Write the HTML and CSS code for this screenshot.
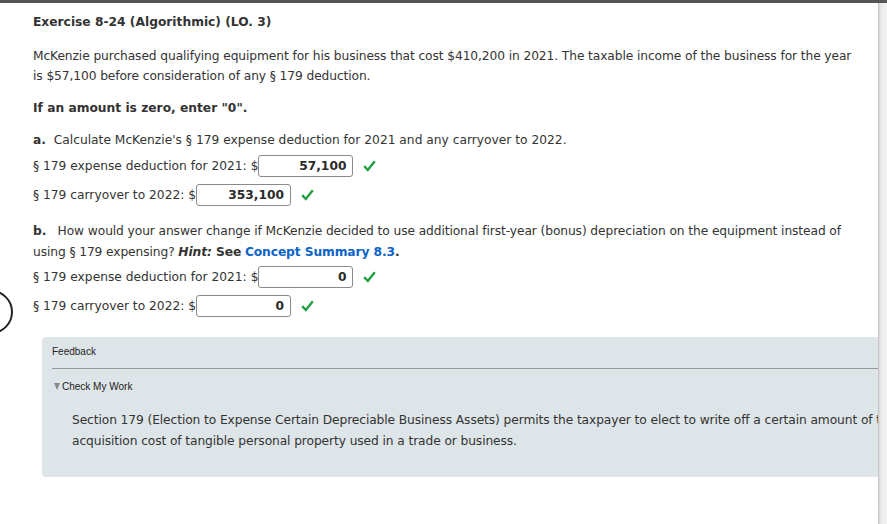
FILE: index.html
```html
<!DOCTYPE html>
<html>
<head>
<meta charset="utf-8">
<link rel="stylesheet" href="styles.css">
</head>
<body>
<div class="topbar"></div>
<div class="page">
  <div class="content">
    <h1 class="title">Exercise 8-24 (Algorithmic) (LO. 3)</h1>
    <p class="para">McKenzie purchased qualifying equipment for his business that cost $410,200 in 2021. The taxable income of the business for the year<br>is $57,100 before consideration of any § 179 deduction.</p>
    <p class="instr">If an amount is zero, enter "0".</p>

    <p class="part"><b>a.</b>&nbsp; Calculate McKenzie's § 179 expense deduction for 2021 and any carryover to 2022.</p>
    <div class="row r1"><span class="lbl">§ 179 expense deduction for 2021: $</span><span class="inp">57,100</span><span class="check"><svg width="13" height="12" viewBox="0 0 13 12"><path d="M1.2 6.2 L4.8 10 L11.8 1.2" fill="none" stroke="#21a042" stroke-width="2.4"/></svg></span></div>
    <div class="row r2"><span class="lbl">§ 179 carryover to 2022: $</span><span class="inp">353,100</span><span class="check"><svg width="13" height="12" viewBox="0 0 13 12"><path d="M1.2 6.2 L4.8 10 L11.8 1.2" fill="none" stroke="#21a042" stroke-width="2.4"/></svg></span></div>

    <p class="part partb"><b>b.</b>&nbsp;&nbsp; How would your answer change if McKenzie decided to use additional first-year (bonus) depreciation on the equipment instead of<br>using § 179 expensing? <b><i>Hint:</i> See</b> <a class="link">Concept Summary 8.3</a><b>.</b></p>
    <div class="row r3"><span class="lbl">§ 179 expense deduction for 2021: $</span><span class="inp">0</span><span class="check"><svg width="13" height="12" viewBox="0 0 13 12"><path d="M1.2 6.2 L4.8 10 L11.8 1.2" fill="none" stroke="#21a042" stroke-width="2.4"/></svg></span></div>
    <div class="row r2"><span class="lbl">§ 179 carryover to 2022: $</span><span class="inp">0</span><span class="check"><svg width="13" height="12" viewBox="0 0 13 12"><path d="M1.2 6.2 L4.8 10 L11.8 1.2" fill="none" stroke="#21a042" stroke-width="2.4"/></svg></span></div>

    <div class="feedback">
      <div class="fb-head">Feedback</div>
      <div class="fb-toggle"><span class="tri"></span>Check My Work</div>
      <p class="fb-text">Section 179 (Election to Expense Certain Depreciable Business Assets) permits the taxpayer to elect to write off a certain amount of the<br>acquisition cost of tangible personal property used in a trade or business.</p>
    </div>
    <div class="circle"></div>
  </div>
  <div class="scrollbar"></div>
</div>
</body>
</html>
```

FILE: styles.css
```css
html, body {
  margin: 0;
  padding: 0;
  background: #fff;
}
body {
  font-family: "DejaVu Sans", Verdana, sans-serif;
  font-size: 12.25px;
  color: #333;
  width: 887px;
  height: 524px;
  overflow: hidden;
}
.topbar {
  height: 3px;
  background: #555;
}
.page {
  display: flex;
  height: 521px;
}
.content {
  flex: 1;
  position: relative;
  overflow: hidden;
  padding-left: 33px;
  padding-top: 9px;
}
.scrollbar {
  width: 8px;
  background: linear-gradient(to right, #d6d6d6, #ececec 30%, #f2f2f2);
  border-left: 1px solid #c8c8c8;
}
.title {
  margin: 0;
  font-size: 12.25px;
  line-height: 20px;
  font-weight: bold;
  color: #333;
}
.para {
  margin: 14px 0 0;
  line-height: 20px;
  white-space: nowrap;
  letter-spacing: -0.1px;
}
.instr {
  margin: 12px 0 0;
  line-height: 20px;
  font-weight: bold;
}
.part {
  margin: 12px 0 0;
  line-height: 20px;
  white-space: nowrap;
}
.partb {
  margin-top: 15px;
  line-height: 21px;
  letter-spacing: -0.1px;
}
.link {
  color: #0a63c7;
  font-weight: bold;
}
.row {
  display: flex;
  align-items: center;
  height: 22px;
  margin-top: 7px;
}
.r1 {
  margin-top: 5px;
}
.r3 {
  margin-top: 3px;
}
.inp {
  box-sizing: border-box;
  width: 95px;
  height: 22px;
  border: 1px solid #8a8a8a;
  border-radius: 3px;
  text-align: right;
  padding-right: 6px;
  font-weight: bold;
  line-height: 20px;
  color: #2a2a2a;
  background: #fff;
}
.check {
  display: flex;
  margin-left: 10px;
}
.feedback {
  margin-top: 20px;
  margin-left: 9px;
  width: 1000px;
  height: 140px;
  background: #dee5e8;
  border-radius: 4px;
  padding: 9px 0 0 10px;
  box-sizing: border-box;
}
.fb-head {
  font-family: "Liberation Sans", Arial, sans-serif;
  font-size: 10px;
  color: #222;
  line-height: 12px;
  padding-bottom: 10px;
  border-bottom: 1px solid #999;
}
.fb-toggle {
  display: flex;
  align-items: center;
  font-family: "Liberation Sans", Arial, sans-serif;
  font-size: 10px;
  color: #222;
  line-height: 12px;
  margin-top: 12px;
  padding-left: 2px;
}
.tri {
  width: 0;
  height: 0;
  border-left: 3.5px solid transparent;
  border-right: 3.5px solid transparent;
  border-top: 7px solid #8a8a8a;
  margin-right: 2px;
  margin-top: -1px;
}
.fb-text {
  margin: 17px 0 0 20px;
  line-height: 21px;
  white-space: nowrap;
  color: #333;
  letter-spacing: -0.1px;
}
.circle {
  position: absolute;
  left: -31px;
  top: 287px;
  width: 40px;
  height: 40px;
  border: 2.5px solid #222;
  border-radius: 50%;
}
```
